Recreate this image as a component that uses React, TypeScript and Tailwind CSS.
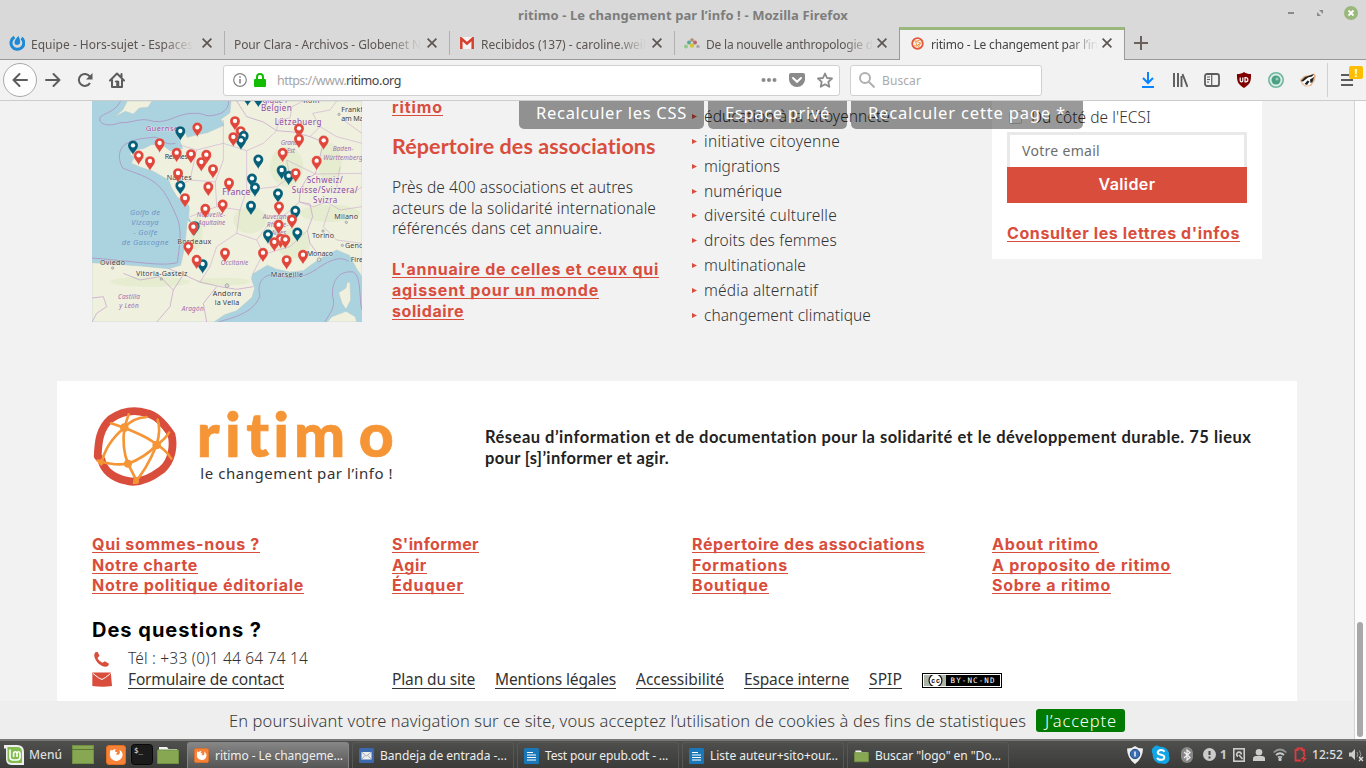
import { useLayoutEffect, useRef, useState, type ReactNode } from "react";

const ui = "font-['Noto_Sans',sans-serif]";
const body = "font-['Noto_Sans',sans-serif] font-light";
const strong = "font-['Inter',sans-serif] font-bold";

/** One line of text whose letter spacing is tuned so that it is `w` pixels wide. */
function Fit({ w, className = "", children }: { w: number; className?: string; children: string }) {
  const ref = useRef<HTMLSpanElement>(null);
  const [spacing, setSpacing] = useState(0);
  useLayoutEffect(() => {
    const el = ref.current;
    if (!el) return;
    el.style.letterSpacing = "0px";
    const next = (w - el.getBoundingClientRect().width) / children.length;
    el.style.letterSpacing = `${next}px`;
    setSpacing(next);
  }, [w, children]);
  return (
    <span ref={ref} style={{ letterSpacing: `${spacing}px` }} className={`inline-block whitespace-pre ${className}`}>
      {children}
    </span>
  );
}

function RedLink({ w, children }: { w: number; children: string }) {
  return (
    <a className="block h-[20.7px] text-[#d94d3d]">
      <Fit
        w={w}
        className={`${strong} text-[16px] leading-[20.7px] underline decoration-1 underline-offset-[2px] [text-decoration-skip-ink:none]`}
      >
        {children}
      </Fit>
    </a>
  );
}

function Cross() {
  return (
    <svg className="h-[10px] w-[10px] shrink-0" viewBox="0 0 10 10" stroke="#5c5552" strokeWidth="1.7">
      <path d="M.6.6 9.4 9.4M9.4.6.6 9.4" />
    </svg>
  );
}

function Tab({ icon, text, w, active, pad }: { icon?: ReactNode; text: string; w: number; active?: boolean; pad: string }) {
  return (
    <div
      className={`relative flex h-[33px] shrink-0 items-center ${pad} ${
        active
          ? "-ml-px w-[226px] border-x border-x-[#999] border-t-[3px] border-t-[#9ab87c] bg-[#f2f2f2] pb-[4px] pr-[12px]"
          : "w-[225px] border-b border-b-[#999] pr-[13px]"
      }`}
    >
      {icon}
      <div className="overflow-hidden [mask-image:linear-gradient(to_right,black_82%,transparent)]">
        <Fit w={w} className={`${ui} text-[12px] leading-[18px] ${active ? "text-[#444]" : "text-[#5c5450]"}`}>
          {text}
        </Fit>
      </div>
      <span className="ml-auto flex">
        <Cross />
      </span>
      {!active && <i className="absolute right-0 top-[4px] h-[24px] w-px bg-[#b0b0b0]" />}
    </div>
  );
}

function FirefoxTile({ className }: { className: string }) {
  return (
    <svg className={className} viewBox="0 0 20 20">
      <rect x=".5" y=".5" width="19" height="19" rx="2.5" fill="#f58236" stroke="#e26e22" />
      <path d="M4 7c0-1 .4-2 1-2.6.2.7.6 1 1.200 1.200C7.500 4.300 9 4 10 4.200 8.800 5 8.700 6 9.500 6.700c.7.5 1.500.2 1.700.7.200.7-1.300 1.300-1.300 1.300.1 1.200 2.300 1.500 3.400.2 1-1.200.8-3-.3-4.200 2.600 1 3.800 3.200 3.600 5.500a6.400 6.400 0 0 1-12.700.2C3.700 9.200 3.800 8 4 7Z" fill="#fff" />
    </svg>
  );
}

const redPins = [
  [435, 68], [452, 98], [430, 116], [322, 87], [209, 134], [146, 171], [180, 188], [260, 163], [303, 167],
  [349, 169], [334, 191], [369, 212], [264, 224], [355, 265], [417, 253], [285, 299], [346, 331], [398, 318],
  [627, 90], [627, 121], [578, 163], [701, 126], [680, 187], [617, 224], [567, 324], [606, 363], [566, 379],
  [572, 421], [586, 423], [553, 431], [519, 463], [590, 485], [639, 469], [405, 463], [320, 484], [295, 444],
];
const bluePins = [
  [473, -6], [505, -2], [271, 98], [129, 141], [461, 112], [453, 126], [505, 183], [486, 240], [495, 267],
  [271, 261], [575, 215], [596, 232], [564, 285], [483, 322], [616, 337], [534, 408], [622, 402], [338, 497], [314, 383],
];

function Pin({ x, y, color }: { x: number; y: number; color: string }) {
  return (
    <g transform={`translate(${x} ${y})`}>
      <path d="M0 24C-4 13-15 7-15-5A15 14.500 0 0 1 15-5C15 7 4 13 0 24Z" fill={color} stroke="#fff" strokeOpacity=".35" />
      <circle cy="-5" r="6.500" fill="#fff" />
    </g>
  );
}

const cities: [number, number, string, number][] = [
  [224, 177, "Rennes", 70], [230, 239, "Nantes", 75], [262, 432, "Bordeaux", 102], [30, 495, "Oviedo", 75],
  [138, 527, "Vitoria-Gasteiz", 154], [368, 587, "Andorra", 86], [374, 615, "la Vella", 74], [542, 531, "Marseille", 97],
  [650, 467, "Monaco", 79], [666, 415, "Torino", 66], [733, 357, "Milano", 71], [765, 443, "Genova", 78],
  [782, 485, "Firenze", 72], [754, 36, "Frankfurt", 95], [754, 63, "am Main", 84], [640, 9, "Köln", 48],
];
const regions: [number, number, string, number][] = [
  [572, 136, "Grand", 52], [590, 160, "Est", 25], [320, 350, "Nouvelle-", 86], [324, 375, "Aquitaine", 82],
  [518, 358, "Auvergne-", 88], [530, 382, "Rhône-", 66], [544, 406, "Alpes", 44], [392, 495, "Occitanie", 83],
  [84, 598, "Castilla", 66], [88, 624, "y León", 58], [275, 632, "Aragón", 66], [728, 154, "Baden-", 62],
  [700, 179, "Württemberg", 118],
];
const countries: [number, number, string, number, number][] = [
  [167, 94, "Guernsey", 23, 110], [518, 8, "gique /", 22, 76], [513, 34, "Belgien", 24, 92], [554, 76, "Lëtzebuerg", 24, 140],
  [397, 286, "France", 26, 84], [650, 248, "Schweiz/", 24, 108], [605, 278, "Suisse/Svizzera/", 24, 198], [669, 308, "Svizra", 24, 73],
];

function FranceMap() {
  return (
    <svg className="h-[221px] w-[270px] shrink-0 font-['Noto_Sans',sans-serif]" viewBox="6 3 810 663">
      <rect x="6" y="3" width="810" height="663" fill="#aad3df" />
      <g fill="#f0f0df" stroke="#b7c9c8" strokeWidth="1.500">
        <path d="M74 50 98 30 112 3H186L174 22 148 24 130 42 106 34Z" />
        <path d="M423 3 420 38 393 58 402 76 352 98 322 104 292 112 284 92 262 84 258 102 272 128 278 146 240 152 214 132 184 134 160 146 128 150 120 162 132 172 124 190 152 202 190 214 214 228 236 240 244 262 262 292 290 306 298 322 296 352 306 370 292 362 284 440 272 496 236 506 150 498 100 494 6 488V666H372L404 644 440 632 486 592 494 564 484 536 488 522 532 496 560 508 600 516 640 512 664 494 700 470 740 450 778 466 800 506 816 530V3Z" />
        <path d="M772 546 780 548 782 600 768 628 756 610 746 578 768 564Z" />
        <path d="M712 666 726 650 768 634 796 650 800 666Z" />
      </g>
      <g fill="#d8e8c0" opacity=".45">
        <ellipse cx="320" cy="400" rx="18" ry="50" />
        <ellipse cx="480" cy="360" rx="50" ry="40" />
        <ellipse cx="610" cy="430" rx="50" ry="45" />
        <ellipse cx="590" cy="200" rx="50" ry="60" />
        <ellipse cx="180" cy="545" rx="120" ry="16" />
        <ellipse cx="720" cy="190" rx="35" ry="60" />
        <ellipse cx="400" cy="545" rx="80" ry="12" />
        <ellipse cx="720" cy="340" rx="90" ry="26" />
      </g>
      <g fill="none" stroke="#b08fc0" strokeWidth="3" opacity=".8">
        <path d="M416 3C416 24 404 38 380 44C340 54 350 38 310 40C260 40 240 70 190 64C150 50 130 70 90 68C60 80 24 76 30 52C50 34 70 40 92 3" />
        <path d="M256 130C220 140 212 108 190 112C150 116 130 118 104 134C84 150 84 180 98 204C130 218 180 230 206 258C230 280 246 320 260 350C278 390 268 440 262 488C210 500 140 484 6 474" />
        <path d="M386 666C430 652 490 640 510 588C500 552 516 520 560 524C610 542 650 530 690 500C720 482 750 466 776 484" />
        <path d="M790 516C742 510 724 550 728 590C738 620 720 640 704 666M790 516C816 530 806 600 816 630" />
      </g>
      <g fill="none" stroke="#c29acb" strokeWidth="1.800" opacity=".8">
        <path d="M440 3 470 50 520 66 560 92 610 96 660 110 700 126 690 170 676 222 650 236 630 270 628 306 660 312 668 350 652 392 660 430 690 470" strokeWidth="2.500" />
        <path d="M560 92 566 60 600 54 606 20 640 3M660 110 690 80 668 40 720 30 740 3M676 222 816 220M628 306 670 320 710 306 750 330 816 320" />
        <path d="M236 506 280 524 330 546 390 560 440 568 490 560" strokeWidth="2.500" />
        <path d="M270 135 320 150 400 130 400 60M400 130 470 152 520 130 560 92M320 150 300 240 260 262M300 240 376 246 400 180 400 130M376 246 380 320 300 350M380 320 450 330 470 270 470 152M470 270 560 260 600 230 590 180 676 222M450 330 440 400 380 440 360 500 330 546M440 400 500 420 530 380 590 340 628 306M500 420 520 460 488 522M530 460 600 440 652 392" />
        <path d="M6 594 40 590 50 620 20 640 6 666M100 520 150 540 210 530 250 570 240 620 200 666M250 570 280 524M380 560 340 610 350 666" strokeWidth="2.500" />
        <path d="M750 200 740 260 790 280 816 260M720 320 700 380 740 420 816 430M760 60 816 100M690 80 740 110 816 130" />
      </g>
      <g fill="#6e94c8" fontStyle="italic" fontSize="23">
        <text x="120" y="346" textLength="90">Golfo de</text>
        <text x="124" y="375" textLength="82">Vizcaya</text>
        <text x="130" y="405" textLength="72">- Golfe</text>
        <text x="95" y="434" textLength="141">de Gascogne</text>
      </g>
      <g fill="#a26fae" fontStyle="italic" fontSize="19.500">
        {regions.map(([x, y, t, w]) => <text key={t} x={x} y={y} textLength={w}>{t}</text>)}
      </g>
      <g fill="#8a4a97" stroke="#f6eff4" strokeWidth="2" paintOrder="stroke">
        {countries.map(([x, y, t, s, w]) => <text key={t} x={x} y={y} fontSize={s} textLength={w}>{t}</text>)}
      </g>
      <g fill="#3a3a3a" stroke="#f6f4ee" strokeWidth="2" paintOrder="stroke" fontSize="21.500">
        {cities.map(([x, y, t, w]) => <text key={t} x={x} y={y} textLength={w}>{t}</text>)}
      </g>
      <g fill="#ddd" stroke="#777" strokeWidth="1.500">
        <circle cx="411" cy="557" r="5.500" /><circle cx="687" cy="479" r="5.500" /><circle cx="68" cy="504" r="3.500" />
        <circle cx="214" cy="537" r="3.500" /><circle cx="747" cy="43" r="3.500" /><circle cx="769" cy="367" r="3.500" />
        <circle cx="699" cy="393" r="3.500" /><circle cx="757" cy="436" r="3.500" />
      </g>
      {redPins.slice(0, 2).map(([x, y]) => <Pin key={`${x}-${y}`} x={x} y={y} color="#e0473a" />)}
      {bluePins.map(([x, y]) => <Pin key={`${x}-${y}`} x={x} y={y} color="#065f78" />)}
      {redPins.slice(2).map(([x, y]) => <Pin key={`${x}-${y}`} x={x} y={y} color="#e0473a" />)}
      <Pin x={310} y={385} color="#e0473a" />
    </svg>
  );
}

function Logo() {
  return (
    <svg className="h-[120px] w-[360px]" viewBox="0 0 1080 360">
      <path d="M64 226C66 180 70 142 104 112C134 92 170 80 214 94C252 100 280 142 292 160C300 190 296 240 262 268C230 292 190 314 148 300C112 292 82 270 76 238Z" fill="none" stroke="#d94d3d" strokeWidth="24" strokeLinejoin="round" transform="translate(9 4) scale(.97 .98)" />
      <g fill="none" stroke="#f59536" strokeWidth="8" strokeLinecap="round" transform="translate(6 0)">
        <path d="M105 127 145 140C190 160 220 170 240 190 260 200 275 215 286 233" />
        <path d="M158 100C154 112 150 124 145 140C140 180 144 220 156 248L184 304" />
        <path d="M212 108C180 110 160 122 145 140C115 165 85 200 76 250" />
        <path d="M65 239C95 248 125 254 156 248C190 236 220 215 242 192 260 180 270 170 279 155" />
        <path d="M245 116C254 140 248 170 242 192C220 245 200 280 174 306" />
      </g>
      <g fill="#f59536" transform="translate(6 0)">
        <circle cx="145" cy="140" r="13" /><circle cx="242" cy="192" r="13" /><circle cx="156" cy="248" r="12" />
        <circle cx="74" cy="243" r="8" /><circle cx="180" cy="300" r="9" />
      </g>
      <text x="368 453 517 598 660 854" y="228" fill="#f59536" stroke="#f59536" strokeWidth="2" fontFamily="Lato, sans-serif" fontWeight="900" fontSize="182" className="[font-variant-ligatures:none]">ritimo</text>
      <text x="379" y="295" fill="#333" fontFamily="Noto Sans, sans-serif" fontSize="45" textLength="577" lengthAdjust="spacing">le changement par l’info !</text>
    </svg>
  );
}

function ChromeBar() {
  return (
    <>
      <header className="relative flex h-[27px] shrink-0 items-center justify-center bg-[#d9d9d9] pt-[3px]">
        <Fit w={330} className={`${ui} text-[13px] font-bold leading-[20px] text-[#7d7d7d]`}>ritimo - Le changement par l’info ! - Mozilla Firefox</Fit>
        <svg className="absolute right-[6px] top-[5px] h-[16px] w-[76px]" viewBox="0 0 76 16">
          <path d="M4 8h6" stroke="#8a8a8a" strokeWidth="2" />
          <path d="M35 5h4v4ZM33 7v4h4Z" fill="#8a8a8a" />
          <circle cx="67" cy="8" r="7" fill="#9ab87c" />
          <path d="m64.500 5.500 5 5m0-5-5 5" stroke="#fff" strokeWidth="1.800" />
        </svg>
      </header>
      <nav className="flex h-[33px] shrink-0 bg-[#d9d9d9]">
        <Tab pad="pl-[9px]" w={162} text="Equipe - Hors-sujet - Espaces" icon={
          <svg className="mr-[6px] h-4 w-4 shrink-0" viewBox="0 0 16 16"><path d="M5.500 2.200A6.400 6.400 0 1 0 12.500 3" fill="none" stroke="#1e8ad6" strokeWidth="3" /><path d="M9.500 1c1 2.500 1.800 4.300 1.600 6.300-.2 1.800-1.500 2.800-3 2.800-1.700 0-2.800-1.200-2.600-2.800C5.700 5 7.500 3 9.500 1Z" fill="#1e8ad6" /></svg>
        } />
        <Tab pad="pl-[9px]" w={187} text="Pour Clara - Archivos - Globenet N" />
        <Tab pad="pl-[10px]" w={165} text="Recibidos (137) - caroline.weil" icon={
          <svg className="mr-[7px] h-[12px] w-[14px] shrink-0" viewBox="0 0 14 12"><path d="M0 0h14v12H0Z" fill="#f5f2f0" /><path d="M1.300 12V1.500L7 6.500l5.700-5V12" fill="none" stroke="#d6402f" strokeWidth="2.500" /></svg>
        } />
        <Tab pad="pl-[9px]" w={167} text="De la nouvelle anthropologie d" icon={
          <svg className="mr-[6px] h-[12px] w-[16px] shrink-0" viewBox="0 0 16 12">
            <circle cx="8" cy="3" r="1.800" fill="#b58a6a" /><circle cx="5" cy="5.500" r="2" fill="#5ba7a0" /><circle cx="11" cy="5.500" r="2" fill="#b56470" />
            <circle cx="2" cy="9.500" r="2" fill="#8fc98b" /><circle cx="8" cy="8.500" r="2.200" fill="#ccc832" /><circle cx="14" cy="9.500" r="1.800" fill="#aaa" />
          </svg>
        } />
        <Tab active pad="pl-[11px]" w={167} text="ritimo - Le changement par l’in" icon={
          <svg className="mr-[7px] h-[13px] w-[13px] shrink-0" viewBox="0 0 13 13" fill="none"><circle cx="6.500" cy="6.500" r="5.300" stroke="#e2583b" strokeWidth="1.800" /><path d="M3 3.500 9.500 6 6 9 4.500 4.500 9 3M2 8.500l4 .5 3.500-3L7 11" stroke="#f59a4a" /></svg>
        } />
        <div className="flex flex-1 items-center border-b border-[#999] pl-[9px]">
          <svg className="h-[14px] w-[14px]" viewBox="0 0 14 14" stroke="#6a605c" strokeWidth="2"><path d="M7 0v14M0 7h14" /></svg>
        </div>
      </nav>
      <div className="flex h-[41px] shrink-0 items-center border-b border-[#ccc] bg-[#f2f2f2]">
        <div className="ml-[3px] flex h-[34px] w-[34px] shrink-0 items-center justify-center rounded-full border border-[#aaa] bg-[#fdfdfd]">
          <svg className="h-4 w-4" viewBox="0 0 16 16" fill="none" stroke="#5c5c5c" strokeWidth="2" strokeLinecap="round" strokeLinejoin="round"><path d="M15 8H1.500M7.500 2l-6 6 6 6" /></svg>
        </div>
        <svg className="ml-[8px] h-4 w-4" viewBox="0 0 16 16" fill="none" stroke="#5c5c5c" strokeWidth="2" strokeLinecap="round" strokeLinejoin="round"><path d="M1 8h13.500M8.500 2l6 6-6 6" /></svg>
        <svg className="ml-[16px] h-4 w-4" viewBox="0 0 16 16" fill="none" stroke="#5c5c5c" strokeWidth="2"><path d="M13 11a6 6 0 1 1-.2-6.500" /><path d="M15.500 1v6.500H9Z" fill="#5c5c5c" stroke="none" /></svg>
        <svg className="ml-[16px] h-4 w-4" viewBox="0 0 16 16" fill="none" stroke="#5c5c5c" strokeWidth="2" strokeLinejoin="round" strokeLinecap="round"><path d="M1 8.500 8 1.500l7 7M3 8v7h10V8M12.500 2v3" /><path d="M8 9v5M6.500 9.500h3V14" strokeWidth="1.500" /></svg>
        <div className="ml-[98px] flex h-[31px] w-[617px] shrink-0 items-center rounded-[3px] border border-[#d0d0d0] bg-white pl-[9px] pr-[6px]">
          <svg className="h-[14px] w-[14px]" viewBox="0 0 14 14" fill="none" stroke="#858585"><circle cx="7" cy="7" r="6.300" strokeWidth="1.200" /><path d="M7 6v4.500M7 3.200v1.600" strokeWidth="1.600" /></svg>
          <svg className="ml-[7px] h-[14px] w-[12px]" viewBox="0 0 12 14"><rect y="6" width="12" height="8" rx="1" fill="#12bc00" /><path d="M3 7V4a3 3 0 0 1 6 0v3" fill="none" stroke="#12bc00" strokeWidth="2" /></svg>
          <span className={`ml-[11px] flex pt-px ${ui} text-[12.500px] leading-[18px]`}><Fit w={69} className="text-[#a5a5a5]">https://www.</Fit><Fit w={55} className="text-[#444]">ritimo.org</Fit></span>
          <svg className="ml-auto h-[16px] w-[72px]" viewBox="0 0 72 16" fill="#8a8a8a">
            <circle cx="2.500" cy="8" r="2" /><circle cx="8" cy="8" r="2" /><circle cx="13.500" cy="8" r="2" />
            <path d="M30 1h12q2 0 2 2v4.500a8 7.500 0 0 1-16 0V3q0-2 2-2Z" /><path d="m32 6 4 3.800L40 6" fill="none" stroke="#fff" strokeWidth="2" strokeLinecap="round" />
            <path d="m64 1.500 2 4.500 5 .5-3.700 3.400 1 4.900L64 12.300l-4.300 2.500 1-4.900L57 6.500l5-.5Z" fill="none" stroke="#8a8a8a" strokeWidth="1.800" strokeLinejoin="round" />
          </svg>
        </div>
        <div className="ml-[10px] flex h-[31px] w-[192px] shrink-0 items-center rounded-[3px] border border-[#d0d0d0] bg-white pl-[8px]">
          <svg className="h-4 w-4" viewBox="0 0 16 16" fill="none" stroke="#b0b0b0" strokeWidth="2"><circle cx="6" cy="6" r="5" /><path d="m9.500 9.500 6 6" /></svg>
          <Fit w={39} className={`${ui} ml-[7px] pt-px text-[12px] leading-[18px] text-[#aaa]`}>Buscar</Fit>
        </div>
        <div className="ml-[90px] flex shrink-0 items-center">
          <svg className="mx-2 h-4 w-4" viewBox="0 0 16 16" fill="none" stroke="#0a84ff" strokeWidth="2"><path d="M8 0v11M3 6l5 5 5-5M2 15h12" /></svg>
          <svg className="mx-2 h-4 w-4" viewBox="0 0 16 16" stroke="#5c5c5c" strokeWidth="2"><path d="M2 1v14M6 1v14M9.500 4v11M10.500 2l5 13" strokeWidth="1.900" /></svg>
          <svg className="mx-2 h-4 w-4" viewBox="0 0 16 16" fill="none" stroke="#5c5c5c" strokeWidth="1.800"><rect x="1" y="2" width="14" height="12" rx="2" /><path d="M7.700 2v12M3 5h3M3 7.500h3M3 10h2" strokeWidth="1.200" /></svg>
          <svg className="mx-2 h-4 w-4" viewBox="0 0 16 16"><path d="M8 0c2 1.500 4 2 7 2 .2 7-.5 10-7 14C1.500 12 .8 9 1 2c3 0 5-.5 7-2Z" fill="#800000" /><path d="M4.200 5.500v3a1.300 1.300 0 0 0 2.600 0v-3M9 5.700v4.100h.8a2.050 2.050 0 0 0 0-4.100Z" fill="none" stroke="#fff" strokeWidth="1.200" /></svg>
          <svg className="mx-2 h-4 w-4" viewBox="0 0 16 16"><circle cx="8" cy="8" r="7.200" fill="#d9eee6" stroke="#70b79f" strokeWidth="1.600" /><circle cx="8" cy="8" r="4.500" fill="#4c9f84" /><circle cx="9" cy="7" r="1.500" fill="#9cd1bf" /></svg>
          <svg className="mx-2 h-4 w-4" viewBox="0 0 16 16"><path d="m0 8 4-4L10 3l4-1.500L15.800 4 14.500 9l-3.500 5-6 .5L2 12Z" fill="#e3ad83" /><path d="m1.500 10 5-4.500L14 3l-1 6-3.500 4.500L5 13.500Z" fill="#fff" /><path d="m1 9 4-4 6-2 3-1-2 2.500-4 1L3 9.500Z" fill="#222" /><path d="m4.500 12 3-3.500 2 1-2.500 3.500ZM10 7.500l4-2.500-1.500 5-2 1Z" fill="#222" /></svg>
          <i className="ml-[3px] h-[34px] w-px bg-[#d0d0d0]" />
          <div className="relative ml-[13px] h-[16px] w-[24px]">
            <svg className="h-[16px] w-[14px]" viewBox="0 0 14 16" stroke="#5c5c5c" strokeWidth="2"><path d="M0 3h12M0 8h12M0 13h12" /></svg>
            <span className={`absolute left-[8px] top-[-6px] flex h-[13px] w-[14px] items-center justify-center rounded-[2px] bg-[#ffbf00] ${ui} text-[11px] font-bold leading-none text-white`}>!</span>
          </div>
        </div>
      </div>
    </>
  );
}

const topics: [string, number][] = [
  ["éducation à la citoyenneté", 186], ["initiative citoyenne", 136], ["migrations", 76], ["numérique", 78],
  ["diversité culturelle", 133], ["droits des femmes", 133], ["multinationale", 102], ["média alternatif", 114],
  ["changement climatique", 167],
];

const footerLinks: [string, number][][] = [
  [["Qui sommes-nous ?", 168], ["Notre charte", 106], ["Notre politique éditoriale", 212]],
  [["S'informer", 87], ["Agir", 35], ["Éduquer", 72]],
  [["Répertoire des associations", 233], ["Formations", 96], ["Boutique", 77]],
  [["About ritimo", 107], ["A proposito de ritimo", 179], ["Sobre a ritimo", 119]],
];

const legal: [string, number][] = [
  ["Plan du site", 83], ["Mentions légales", 121], ["Accessibilité", 88], ["Espace interne", 105], ["SPIP", 33],
];

const adminButtons: [string, number, string][] = [
  ["Recalculer les CSS", 151, "w-[185px]"], ["Espace privé", 105, "w-[139px]"], ["Recalculer cette page *", 198, "w-[232px]"],
];

function UpperContent() {
  return (
    <section className="flex h-[280px] shrink-0 gap-[30px] pl-[92px]">
      <FranceMap />
      <div className="w-[270px] shrink-0">
        <div className="-mt-[6px]"><RedLink w={51}>ritimo</RedLink></div>
        <h2 className="mt-[17px] h-[26px]">
          <Fit w={264} className="font-['Lato',sans-serif] text-[21.500px] font-bold leading-[26px] text-[#d94d3d]">Répertoire des associations</Fit>
        </h2>
        <div className={`mt-[18.300px] ${body} text-[15.500px] leading-[20.700px] text-[#333]`}>
          <Fit w={241}>Près de 400 associations et autres</Fit>
          <Fit w={264}>acteurs de la solidarité internationale</Fit>
          <Fit w={210}>référencés dans cet annuaire.</Fit>
        </div>
        <div className="mt-[18.400px]">
          <RedLink w={267}>L'annuaire de celles et ceux qui</RedLink>
          <RedLink w={207}>agissent pour un monde</RedLink>
          <RedLink w={72}>solidaire</RedLink>
        </div>
      </div>
      <ul className="w-[270px] shrink-0 pt-[3px]">
        {topics.map(([t, w]) => (
          <li key={t} className={`flex h-[24.860px] items-center ${body} text-[15.500px] leading-[24.860px] text-[#333]`}>
            <svg className="mr-[7px] h-[5px] w-[5px]" viewBox="0 0 5 5"><path d="M0 0 5 2.500 0 5Z" fill="#d94d3d" /></svg>
            <Fit w={w}>{t}</Fit>
          </li>
        ))}
      </ul>
      <aside className="h-[158px] w-[270px] shrink-0 bg-white px-[15px] pt-[4px]">
        <div className="mb-[2px] flex h-[25px] items-center pl-[2px]">
          <i className="mr-[9px] h-[13px] w-[13px] rounded-[2px] border border-[#ccc] bg-white" />
          <Fit w={120} className={`${body} text-[15.500px] leading-[21px] text-[#333]`}>Du côté de l'ECSI</Fit>
        </div>
        <div className="flex h-[35px] items-center border-x-[3px] border-t-[3px] border-[#e9e9e9] pl-[12px]">
          <Fit w={78} className={`${ui} text-[14px] leading-[20px] text-[#6e6e6e]`}>Votre email</Fit>
        </div>
        <div className="flex h-[36px] items-center justify-center bg-[#d94d3d] pb-[2px]">
          <Fit w={57} className="font-['Inter',sans-serif] text-[16px] font-semibold leading-[20px] text-white">Valider</Fit>
        </div>
        <div className="mt-[18px]"><RedLink w={233}>Consulter les lettres d'infos</RedLink></div>
      </aside>
    </section>
  );
}

function PageFooter() {
  return (
    <footer className="ml-[57px] h-[320px] w-[1240px] shrink-0 bg-white">
      <div className="flex h-[151px]">
        <div className="w-[428px] pl-[17px]"><Logo /></div>
        <div className="pt-[45.500px] font-['Lato',sans-serif] text-[16.500px] font-bold leading-[21px] text-[#222]">
          <Fit w={767}>Réseau d’information et de documentation pour la solidarité et le développement durable. 75 lieux</Fit>
          <br />
          <Fit w={184}>pour [s]’informer et agir.</Fit>
        </div>
      </div>
      <div className="flex gap-[30px] pl-[35px]">
        {footerLinks.map((col) => (
          <div key={col[0][0]} className="w-[270px] shrink-0">
            {col.map(([t, w]) => <RedLink key={t} w={w}>{t}</RedLink>)}
          </div>
        ))}
      </div>
      <h3 className="mt-[22px] h-[28px] pl-[35px]"><Fit w={170} className={`${strong} text-[20px] leading-[28px] text-black`}>Des questions ?</Fit></h3>
      <div className={`flex pl-[35px] pt-[4px] ${ui} text-[15.500px] leading-[21px] text-[#333]`}>
        <div className="w-[300px] shrink-0">
          <div className="flex h-[21px] items-center font-light">
            <svg className="mr-[16px] h-[16px] w-[20px]" viewBox="0 0 20 16"><path d="M3 1.500 5.500.8l2 4L5.500 7c1 2 2.600 3.600 5 4.800l2.300-1.500 4.200 2.500-.8 2c-1.500 1.400-4 1.300-6.500 0C5.500 12.600 2.300 8 2.200 4Z" fill="#d94d3d" /></svg>
            <Fit w={180}>Tél : +33 (0)1 44 64 74 14</Fit>
          </div>
          <div className="flex h-[21px] items-center">
            <svg className="mr-[16px] h-[15px] w-[20px]" viewBox="0 0 20 15"><path d="M.3.5h18.500L20 14q-9 1.500-19.700 0Z" fill="#d94d3d" /><path d="m1 1.500 5.500 4.300 3.500 1.700 3.500-2L18.500 1.500" fill="none" stroke="#fff" /></svg>
            <Fit w={156} className="underline decoration-1 underline-offset-[3px] [text-decoration-skip-ink:none]">Formulaire de contact</Fit>
          </div>
        </div>
        <div className="mt-[21px] flex h-[21px] items-center gap-[20px]">
          {legal.map(([t, w]) => (
            <Fit key={t} w={w} className="underline decoration-1 underline-offset-[3px] [text-decoration-skip-ink:none]">{t}</Fit>
          ))}
          <div className="mt-[2px] flex h-[15px] w-[80px] items-center border border-black bg-black p-px outline outline-1 -outline-offset-2 outline-white">
            <svg className="h-[11px] w-[76px]" viewBox="0 0 76 11">
              <rect width="22" height="11" fill="#adb5a9" /><circle cx="11.500" cy="5.500" r="7" fill="#111" /><circle cx="11.500" cy="5.500" r="5.800" fill="#fff" />
              <text x="7.300" y="8" fontFamily="Liberation Sans" fontWeight="700" fontSize="7" fill="#111" textLength="8.500">cc</text>
              <text x="26.500" y="8.300" fontFamily="DejaVu Sans Mono" fontSize="7.500" fill="#fff" textLength="44">BY-NC-ND</text>
            </svg>
          </div>
        </div>
      </div>
    </footer>
  );
}

function Folder({ className }: { className: string }) {
  return (
    <svg className={className} viewBox="0 0 22 18"><path d="M2 1h8l1.500 2H20v4H2Z" fill="#f2f2f2" /><path d="M.5 4h21v13.500H.5Z" fill="#87a752" stroke="#6f8f43" /></svg>
  );
}

function DocIcon() {
  return (
    <svg className="h-[16px] w-[15px]" viewBox="0 0 15 16"><rect width="15" height="16" rx="1.500" fill="#1b78b8" /><path d="M3 4.500h6M3 7h9M3 9.500h9M3 12h9" stroke="#fff" strokeWidth="1.200" /></svg>
  );
}

const tasks: { text: string; w: number; icon: ReactNode; active?: boolean }[] = [
  { text: "ritimo - Le changeme...", w: 128, icon: <FirefoxTile className="h-[15px] w-[15px]" />, active: true },
  {
    text: "Bandeja de entrada -...", w: 127, icon: (
      <svg className="h-[15px] w-[15px]" viewBox="0 0 15 15"><rect width="15" height="15" rx="1.500" fill="#3c68ad" /><rect x="2.500" y="4" width="10" height="7.500" fill="#eee" /><path d="m2.500 4 5 4 5-4M2.500 11.500 6 7.500M12.500 11.500 9 7.500" fill="none" stroke="#8794aa" strokeWidth=".8" /></svg>
    ),
  },
  { text: "Test pour epub.odt - ...", w: 123, icon: <DocIcon /> },
  { text: "Liste auteur+sito+our...", w: 128, icon: <DocIcon /> },
  { text: "Buscar \"logo\" en \"Do...", w: 126, icon: <Folder className="h-[14px] w-[15px]" /> },
];

function Taskbar() {
  return (
    <div className={`flex h-[29px] shrink-0 items-center border-t-2 border-[#777] bg-gradient-to-b from-[#4f504d] to-[#3b3c3a] ${ui} text-[12px] leading-[20px] text-[#eee]`}>
      <svg className="ml-[4px] h-[20px] w-[20px]" viewBox="0 0 20 20"><path d="M0 0h13q7 0 7 7v13H8q-6 0-6-6V3.500H0Z" fill="#eee" /><path d="M3.500 2H13q5 0 5 5v11H8q-4.500 0-4.500-4Z" fill="#83bd50" /><path d="M6 4.500V12q0 3 3 3h4q3 0 3-3V8.500q0-1.700-1.500-1.700T13 8.500V12m0-3.500q0-1.700-1.700-1.700T9.600 8.500V12" fill="none" stroke="#fff" strokeWidth="1.600" /></svg>
      <Fit w={33} className="ml-[5px] font-medium text-[#ddd]">Menú</Fit>
      <svg className="ml-[10px] h-[19px] w-[22px]" viewBox="0 0 22 19"><rect x=".5" y=".5" width="21" height="18" fill="#87a752" stroke="#6f8f43" /><path d="M0 4.500h22" stroke="#567530" /></svg>
      <FirefoxTile className="ml-[12px] h-[20px] w-[20px]" />
      <svg className="ml-[5px] h-[21px] w-[22px]" viewBox="0 0 22 21"><rect x=".5" y=".5" width="21" height="20" rx="3" fill="#1b1b1b" stroke="#080808" /><text x="3" y="8.500" fontFamily="DejaVu Sans Mono" fontSize="7.500" fill="#eee">$_</text></svg>
      <Folder className="ml-[4px] h-[18px] w-[22px]" />
      <div className="ml-[8px] flex h-full gap-[3px] pt-px">
        {tasks.map((t) => (
          <div key={t.text} className={`flex h-[26px] w-[162px] items-center gap-[6px] rounded-t-[3px] border border-b-0 pl-[6px] ${t.active ? "border-[#858585] bg-gradient-to-b from-[#868686] to-[#555]" : "border-[#575856]"}`}>
            {t.icon}
            <Fit w={t.w}>{t.text}</Fit>
          </div>
        ))}
      </div>
      <svg className="ml-[118px] h-[18px] w-[16px]" viewBox="0 0 16 18"><path d="M8 0q3 2.500 8 2.500-.2 10-8 15.500Q.2 12.500 0 2.500 5 2.500 8 0Z" fill="#eee" /><circle cx="8" cy="8" r="4.700" fill="#3b6db2" stroke="#234a85" /><path d="M8 5.500v5" stroke="#fff" strokeWidth="1.400" /></svg>
      <svg className="ml-[8px] h-[20px] w-[20px]" viewBox="0 0 20 20"><path d="M6 .5a8.500 8.500 0 0 1 3 1.300 8 8 0 0 1 9 9.200A5.500 5.500 0 0 1 11 18.500 8.500 8.500 0 0 1 1.700 9 5.500 5.500 0 0 1 6 .5Z" fill="#12a5e6" /><path d="M13.500 6.800Q12.500 5 10 5T6.700 7.300q0 1.900 3.300 2.500t3.300 2.500Q13.300 14.800 10 14.800T6.300 12.800" fill="none" stroke="#fff" strokeWidth="2" /></svg>
      <svg className="ml-[10px] h-[16px] w-[12px]" viewBox="0 0 12 16"><rect width="12" height="16" rx="6" fill="#888" /><path d="m3 5 6 5.500L6 13V3l3 2.500L3 11" fill="none" stroke="#f2f2f2" strokeWidth="1.200" /></svg>
      <svg className="ml-[10px] h-[13px] w-[13px]" viewBox="0 0 13 13"><circle cx="6.500" cy="6.500" r="6.500" fill="#ccc" /><path d="M6.500 3v4M6.500 8.500v2" stroke="#444" strokeWidth="2" /></svg>
      <span className="ml-[4px] w-[7px] font-bold text-[#ccc]">1</span>
      <svg className="ml-[6px] h-[14px] w-[12px]" viewBox="0 0 12 14" fill="none" stroke="#ccc" strokeWidth="1.600"><rect x=".8" y=".8" width="10.400" height="12.400" /><path d="M8.300 6.500A2.300 2.300 0 1 0 5 8.500M6 7l3.500 4" /></svg>
      <svg className="ml-[8px] h-[12px] w-[12px]" viewBox="0 0 12 12" fill="#ccc"><circle cx="6" cy="3.300" r="3.300" /><path d="M0 12V9.500Q0 7 3 7h6q3 0 3 2.500V12Z" /></svg>
      <svg className="ml-[8px] h-[13px] w-[14px]" viewBox="0 0 14 13" fill="none" stroke="#ccc" strokeWidth="1.700"><path d="M.7 4.500Q7-1.500 13.300 4.500" opacity=".6" /><path d="M3 7q4-3.500 8 0M5 9.500q2-1.500 4 0" /><circle cx="7" cy="11.500" r=".8" fill="#ccc" /></svg>
      <svg className="ml-[7px] h-[16px] w-[13px]" viewBox="0 0 13 16"><path d="M7 13.500H1.500V3h2V1.500H8V3h2v5" fill="none" stroke="#dd3b40" strokeWidth="1.800" /><path d="M10.500 8 6.500 12h3l-1.500 4 5-5h-3L12 8Z" fill="#dd3b40" /></svg>
      <Fit w={31} className="ml-[5px] font-medium text-[#ddd]">12:52</Fit>
      <svg className="ml-[6px] h-[14px] w-[15px]" viewBox="0 0 15 14"><path d="M0 4.500h2.500L6 1v11L2.500 8.500H0Z" fill="#ccc" /><path d="M8 4q1.500 2.500 0 5M10.500 2.500q2.500 4 0 8" fill="none" stroke="#999" /><path d="m10 9 4 4m0-4-4 4" stroke="#ddd" strokeWidth="1.300" /></svg>
    </div>
  );
}

export default function App() {
  return (
    <div className="flex h-[768px] w-[1366px] flex-col overflow-hidden bg-[#f2f2f2]">
      <ChromeBar />
      <main className="flex h-[638px] shrink-0">
        <div className="relative flex w-[1354px] flex-col overflow-hidden">
          <UpperContent />
          <PageFooter />
          <div className={`flex h-[38px] items-center bg-[#eee] pl-[229px] pt-px text-[#3a3a3a] ${body} text-[16.500px] leading-[22px]`}>
            <Fit w={797}>En poursuivant votre navigation sur ce site, vous acceptez l’utilisation de cookies à des fins de statistiques</Fit>
            <span className="ml-[10px] flex h-[23px] w-[89px] items-center rounded-[3px] bg-[#007a00] pl-[9px] text-white"><Fit w={72}>J’accepte</Fit></span>
          </div>
          <div className="absolute left-[519px] top-0 flex gap-[4px]">
            {adminButtons.map(([t, w, size]) => (
              <div key={t} className={`flex h-[28px] justify-center rounded-b-[5px] bg-black/40 ${size}`}>
                <Fit w={w} className={`${ui} text-[16.500px] leading-[24px] text-white`}>{t}</Fit>
              </div>
            ))}
          </div>
        </div>
        <div className="w-[12px] border-l border-[#d4d4d4] bg-[#fcfcfc] pl-[2px] pt-[521px]">
          <div className="h-[115px] w-[6px] rounded-full bg-[#a8a8a8]" />
        </div>
      </main>
      <Taskbar />
    </div>
  );
}
